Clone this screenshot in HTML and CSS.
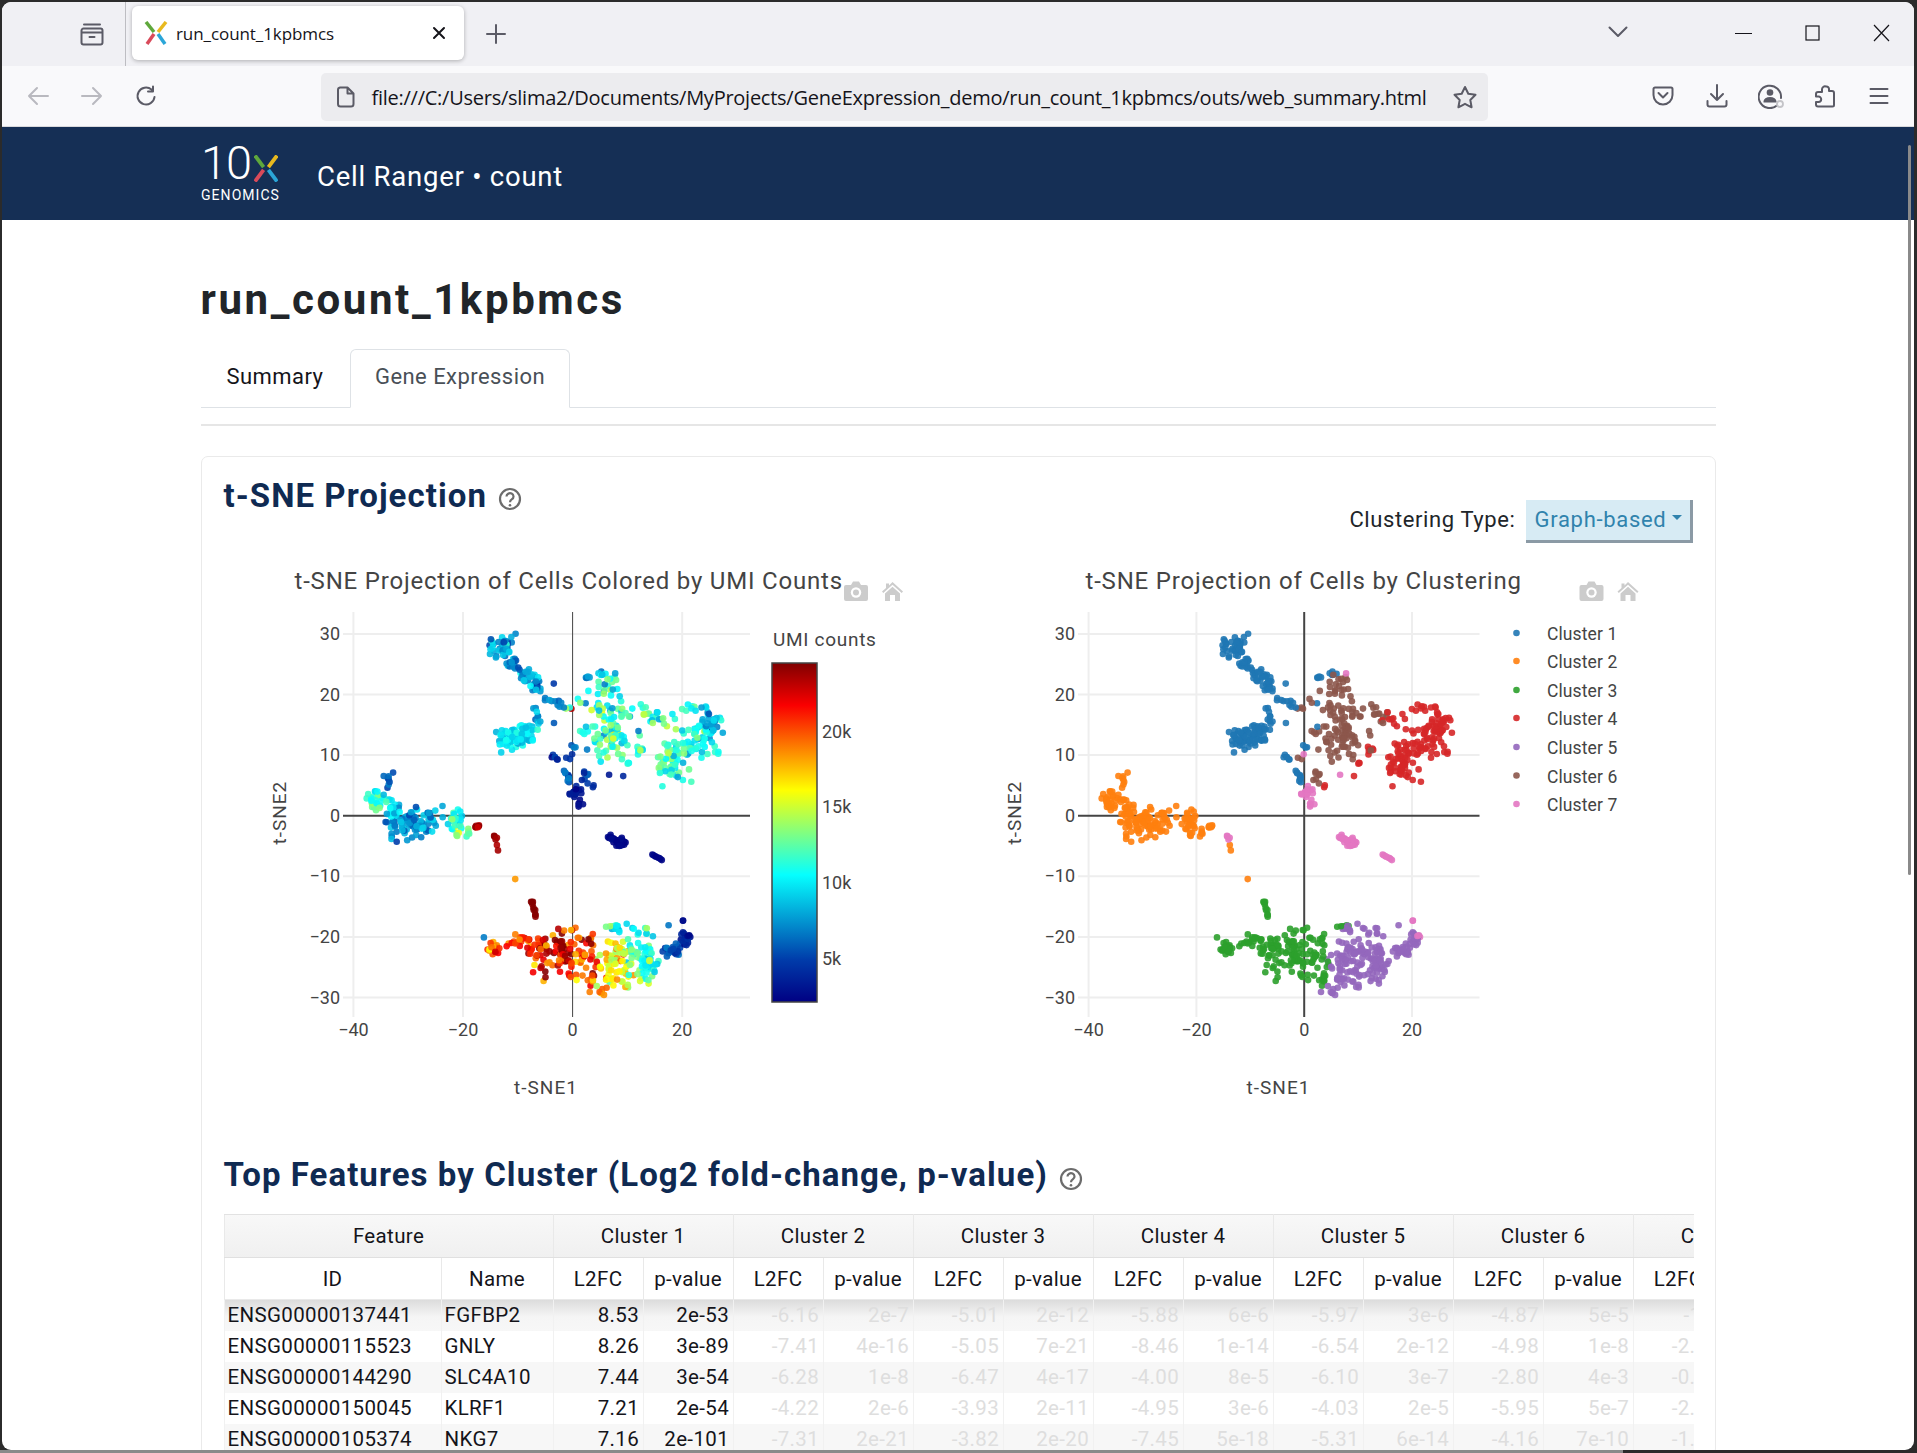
FILE: index.html
```html
<!DOCTYPE html>
<html lang="en">
<head>
<meta charset="utf-8">
<title>run_count_1kpbmcs</title>
<link rel="stylesheet" href="styles.css">
</head>
<body>
<div class="window">
  <div class="tabstrip">
    <div class="archive">
      <svg width="26" height="26" viewBox="0 0 26 26" class="chrome-icon"><path d="M5 3.500h16M2.500 9.500A2 2 0 0 1 4.500 7.500h17a2 2 0 0 1 2 2v12a2 2 0 0 1-2 2h-17a2 2 0 0 1-2-2zM2.500 11.500h21M10.500 16h5"/></svg>
    </div>
    <div class="tab">
      <svg width="24" height="24" viewBox="0 0 24 24" class="favicon"><path class="x-g" d="M2 1l8 10"/><path class="x-y" d="M22 1l-8 10"/><path class="x-r" d="M10 13L3 23"/><path class="x-b" d="M14 13l7 10"/></svg>
      <span class="tab-title">run_count_1kpbmcs</span>
      <svg width="14" height="14" viewBox="0 0 14 14" class="dark-icon"><path d="M2 2l10 10M12 2L2 12"/></svg>
    </div>
    <div class="plus"><svg width="20" height="20" viewBox="0 0 20 20" class="chrome-icon"><path d="M10 1v18M1 10h18"/></svg></div>
    <div class="chevron"><svg width="20" height="12" viewBox="0 0 20 12" class="chrome-icon"><path d="M1.500 1.500L10 10l8.500-8.500"/></svg></div>
    <div class="winctl"><svg width="17" height="3" viewBox="0 0 17 3" class="win-icon"><path d="M0 1.500h17"/></svg></div>
    <div class="winctl"><svg width="15" height="16" viewBox="0 0 15 16" class="win-icon"><rect x="1" y="1" width="13" height="14"/></svg></div>
    <div class="winctl"><svg width="17" height="18" viewBox="0 0 17 18" class="win-icon"><path d="M1 1l15 16M16 1L1 17"/></svg></div>
  </div>
  <div class="toolbar">
    <div class="tool"><svg width="22" height="20" viewBox="0 0 22 20" class="muted-icon"><path d="M21 10H2M10 2l-8 8 8 8"/></svg></div>
    <div class="tool"><svg width="22" height="20" viewBox="0 0 22 20" class="muted-icon"><path d="M1 10h19M12 2l8 8-8 8"/></svg></div>
    <div class="tool"><svg width="22" height="22" viewBox="0 0 22 22" class="chrome-icon"><path d="M19.500 12a8.500 8.500 0 1 1-3-7.500M18 1.500v5h-5"/></svg></div>
    <div class="urlbar">
      <svg width="18" height="22" viewBox="0 0 18 22" class="chrome-icon"><path d="M3 1.500h7.500l6 6V18a2.500 2.500 0 0 1-2.500 2.500H3.500A2.500 2.500 0 0 1 1 18V4A2.500 2.500 0 0 1 3 1.500zM10.500 1.500v6h6"/></svg>
      <span class="url">file:///C:/Users/slima2/Documents/MyProjects/GeneExpression_demo/run_count_1kpbmcs/outs/web_summary.html</span>
      <svg width="26" height="24" viewBox="0 0 26 24" class="chrome-icon"><path d="M13 2l3.300 6.800 7.200 1-5.200 5.200 1.300 7.300-6.600-3.500-6.600 3.500 1.300-7.300-5.200-5.200 7.200-1z"/></svg>
    </div>
    <div class="tools-right">
      <div class="tool"><svg width="22" height="20" viewBox="0 0 22 20" class="chrome-icon"><path d="M3 1.500h16A1.500 1.500 0 0 1 20.500 3v6a9.500 9.500 0 0 1-19 0V3A1.500 1.500 0 0 1 3 1.500zM6.500 7l4.500 4.500L15.500 7"/></svg></div>
      <div class="tool"><svg width="22" height="24" viewBox="0 0 22 24" class="chrome-icon"><path d="M11 1v15M5 10l6 6 6-6M1.500 17v3.500a2 2 0 0 0 2 2h15a2 2 0 0 0 2-2V17"/></svg></div>
      <div class="tool"><svg width="26" height="26" viewBox="0 0 26 26" class="chrome-icon"><path d="M19 22.500A11.200 11.200 0 1 1 23 15"/><circle class="solid" cx="12" cy="9.500" r="3.300"/><path class="solid" d="M5.500 18.500a6.500 4.500 0 0 1 13 0v1h-13z"/><circle class="badge" cx="22" cy="21" r="3"/></svg></div>
      <div class="tool"><svg width="22" height="24" viewBox="0 0 22 24" class="chrome-icon"><path d="M12 2.500a2.600 2.600 0 0 1 3 3V7h3a2 2 0 0 1 2 2v12a1.500 1.500 0 0 1-1.500 1.500H4a2 2 0 0 1-2-2V18h2.500a2.700 2.700 0 0 0 0-5.400H2V10a2 2 0 0 1 2-2h4V5.500a3 3 0 0 1 4-3z"/></svg></div>
      <div class="tool"><svg width="20" height="18" viewBox="0 0 20 18" class="chrome-icon"><path d="M1.500 2h17M1.500 9h17M1.500 16h17"/></svg></div>
    </div>
  </div>
  <div class="page">
    <header class="brand">
      <div class="logo">
        <div class="logo-top">
          <span class="logo-ten">10</span>
          <svg width="24" height="27" viewBox="0 0 25 27" class="logo-x"><path class="x-g" d="M1 0l9 12"/><path class="x-y" d="M24 0l-9 12"/><path class="x-r" d="M10 15L1 27"/><path class="x-b" d="M15 15l9 12"/></svg>
        </div>
        <div class="logo-word">GENOMICS</div>
      </div>
      <div class="brand-title">Cell Ranger • count</div>
    </header>
    <main class="content">
      <h1 class="run-title">run_count_1kpbmcs</h1>
      <nav class="tabs">
        <div class="nav-tab">Summary</div>
        <div class="nav-tab active">Gene Expression</div>
      </nav>
      <div class="rule"></div>
      <section class="card">
        <div class="card-head">
          <h2 class="section-title">t-SNE Projection
            <svg width="24" height="24" viewBox="0 0 24 24" class="help"><circle cx="12" cy="12" r="10"/><path d="M8.500 9.500a3.500 3.300 0 1 1 5.500 2.700c-1.300.9-2 1.500-2 3"/><circle class="dot" cx="12" cy="18.300" r="1.300"/></svg>
          </h2>
          <div class="cluster-ctl">
            <span class="cluster-label">Clustering Type:</span>
            <button class="cluster-btn" type="button">Graph-based<span class="caret"></span></button>
          </div>
        </div>
        <div class="plots">
          <svg id="plot-umi" class="plot" width="735" height="577" viewBox="0 0 735 577"></svg>
          <svg id="plot-cluster" class="plot" width="735" height="577" viewBox="0 0 735 577"></svg>
        </div>
        <h2 class="section-title features">Top Features by Cluster (Log2 fold-change, p-value)
          <svg width="24" height="24" viewBox="0 0 24 24" class="help"><circle cx="12" cy="12" r="10"/><path d="M8.500 9.500a3.500 3.300 0 1 1 5.500 2.700c-1.300.9-2 1.500-2 3"/><circle class="dot" cx="12" cy="18.300" r="1.300"/></svg>
        </h2>
        <div class="table-clip">
          <table class="features-table">
            <colgroup>
              <col class="c-id"><col class="c-name">
              <col class="c-v"><col class="c-v"><col class="c-v"><col class="c-v"><col class="c-v"><col class="c-v">
              <col class="c-v"><col class="c-v"><col class="c-v"><col class="c-v"><col class="c-v"><col class="c-v">
              <col class="c-v"><col class="c-v">
            </colgroup>
            <thead>
              <tr class="head-top">
                <th colspan="2">Feature</th><th colspan="2">Cluster 1</th><th colspan="2">Cluster 2</th><th colspan="2">Cluster 3</th><th colspan="2">Cluster 4</th><th colspan="2">Cluster 5</th><th colspan="2">Cluster 6</th><th colspan="2">Cluster 7</th>
              </tr>
              <tr class="head-sub">
                <th>ID</th><th>Name</th><th>L2FC</th><th>p-value</th><th>L2FC</th><th>p-value</th><th>L2FC</th><th>p-value</th><th>L2FC</th><th>p-value</th><th>L2FC</th><th>p-value</th><th>L2FC</th><th>p-value</th><th>L2FC</th><th>p-value</th>
              </tr>
            </thead>
            <tbody>
              <tr class="first"><td class="t">ENSG00000137441</td><td class="t">FGFBP2</td><td>8.53</td><td>2e-53</td><td class="d">-6.16</td><td class="d">2e-7</td><td class="d">-5.01</td><td class="d">2e-12</td><td class="d">-5.88</td><td class="d">6e-6</td><td class="d">-5.97</td><td class="d">3e-6</td><td class="d">-4.87</td><td class="d">5e-5</td><td class="d">-1.9</td><td class="d"></td></tr>
              <tr><td class="t">ENSG00000115523</td><td class="t">GNLY</td><td>8.26</td><td>3e-89</td><td class="d">-7.41</td><td class="d">4e-16</td><td class="d">-5.05</td><td class="d">7e-21</td><td class="d">-8.46</td><td class="d">1e-14</td><td class="d">-6.54</td><td class="d">2e-12</td><td class="d">-4.98</td><td class="d">1e-8</td><td class="d">-2.41</td><td class="d"></td></tr>
              <tr><td class="t">ENSG00000144290</td><td class="t">SLC4A10</td><td>7.44</td><td>3e-54</td><td class="d">-6.28</td><td class="d">1e-8</td><td class="d">-6.47</td><td class="d">4e-17</td><td class="d">-4.00</td><td class="d">8e-5</td><td class="d">-6.10</td><td class="d">3e-7</td><td class="d">-2.80</td><td class="d">4e-3</td><td class="d">-0.87</td><td class="d"></td></tr>
              <tr><td class="t">ENSG00000150045</td><td class="t">KLRF1</td><td>7.21</td><td>2e-54</td><td class="d">-4.22</td><td class="d">2e-6</td><td class="d">-3.93</td><td class="d">2e-11</td><td class="d">-4.95</td><td class="d">3e-6</td><td class="d">-4.03</td><td class="d">2e-5</td><td class="d">-5.95</td><td class="d">5e-7</td><td class="d">-2.33</td><td class="d"></td></tr>
              <tr><td class="t">ENSG00000105374</td><td class="t">NKG7</td><td>7.16</td><td>2e-101</td><td class="d">-7.31</td><td class="d">2e-21</td><td class="d">-3.82</td><td class="d">2e-20</td><td class="d">-7.45</td><td class="d">5e-18</td><td class="d">-5.31</td><td class="d">6e-14</td><td class="d">-4.16</td><td class="d">7e-10</td><td class="d">-1.58</td><td class="d"></td></tr>
            </tbody>
          </table>
        </div>
      </section>
    </main>
    <div class="scrollthumb"></div>
  </div>
</div>
<script src="chart.js"></script>
</body>
</html>
```
FILE: styles.css
```css
* { box-sizing: border-box; }
html, body { margin: 0; height: 100%; overflow: hidden; }
body {
  background: linear-gradient(to right, #8a8a8a 1623px, #2b2b2b 1623px) no-repeat left bottom / 100% 3px, #2b2b2b;
  font-family: Roboto, "Liberation Sans", sans-serif;
  padding: 2px 3px 3px 2px;
}
.window {
  height: 100%;
  border-radius: 9px;
  overflow: hidden;
  display: flex;
  flex-direction: column;
  background: #fff;
}
.tabstrip {
  height: 64px;
  flex: none;
  background: #f0f0f4;
  display: flex;
  align-items: flex-start;
}
.archive {
  width: 123.500px;
  height: 64px;
  padding-left: 77px;
  display: flex;
  align-items: center;
  border-right: 1px solid #bdbdc2;
  margin-right: 6.500px;
}
.tab {
  width: 332px;
  height: 54px;
  margin-top: 4px;
  background: #fff;
  border-radius: 6px;
  box-shadow: 0 1px 4px rgba(0,0,0,.28);
  display: flex;
  align-items: center;
  padding: 0 18px 0 12px;
}
.tab-title { flex: 1; margin-left: 8px; font: 17px "Open Sans", sans-serif; letter-spacing: -.08px; color: #15141a; }
.favicon path, .logo-x path { fill: none; stroke-width: 3.500; }
.logo-x path { stroke-width: 4; }
.x-g { stroke: #5fa83c; }
.x-y { stroke: #e8b91f; }
.x-r { stroke: #d94a5a; }
.x-b { stroke: #2ba6d8; }
.chrome-icon, .muted-icon, .dark-icon, .win-icon { fill: none; stroke: #5b5b66; stroke-width: 2; stroke-linecap: round; stroke-linejoin: round; display: block; }
.muted-icon { stroke: #b9b9bf; }
.dark-icon { stroke: #15141a; }
.win-icon { stroke: #15141a; stroke-width: 1.200; stroke-linecap: butt; stroke-linejoin: miter; }
.chrome-icon .solid { fill: #5b5b66; stroke: none; }
.chrome-icon .badge { stroke: #c4c4c8; fill: #f9f9fb; stroke-width: 1.800; }
.plus { width: 54px; height: 64px; margin-left: 5px; display: flex; align-items: center; justify-content: center; }
.chevron { width: 40px; height: 60px; margin-left: auto; margin-right: 71px; display: flex; align-items: center; justify-content: center; }
.winctl { width: 69px; height: 62px; display: flex; align-items: center; justify-content: center; }
.winctl:last-child { margin-right: -2px; }
.toolbar {
  height: 61px;
  flex: none;
  background: #f9f9fb;
  border-bottom: 1px solid #d9d9dc;
  display: flex;
  align-items: center;
  padding: 0 8px 0 9px;
}
.tool { width: 54px; display: flex; justify-content: center; align-items: center; }
.urlbar {
  width: 1167px;
  height: 48px;
  margin-left: 147.500px;
  margin-top: 2px;
  background: #ececef;
  border-radius: 5px;
  display: flex;
  align-items: center;
  padding: 0 10px 0 16px;
}
.url { flex: 1; margin-left: 17px; font: 20px "Open Sans", sans-serif; letter-spacing: -.255px; color: #15141a; white-space: nowrap; }
.tools-right { margin-left: auto; display: flex; }
.page { flex: 1; min-height: 0; position: relative; overflow: hidden; }
.brand {
  height: 93px;
  background: #152f55;
  display: flex;
  align-items: center;
  padding-left: 199px;
}
.logo { width: 116px; color: #fff; margin-top: -1px; }
.logo-top { display: flex; align-items: flex-end; height: 38px; }
.logo-ten { font: 300 47px/38px Roboto, sans-serif; letter-spacing: -1px; }
.logo-x { margin-left: 3px; }
.logo-word { font: 14px/16px Roboto, sans-serif; letter-spacing: 1.050px; margin-top: 5px; }
.brand-title { color: #fff; font-size: 27.500px; letter-spacing: .77px; margin-top: 5px; }
.content { width: 1515px; margin: 0 auto; padding-top: 55px; }
.run-title { margin: 0; font-size: 42px; line-height: 50px; font-weight: 700; color: #212529; letter-spacing: 2.600px; }
.tabs { display: flex; margin-top: 24px; height: 59px; border-bottom: 1px solid #dee2e6; }
.nav-tab {
  height: 59px;
  padding: 0 25px;
  font-size: 22px;
  line-height: 53px;
  letter-spacing: .45px;
  color: #14141a;
  border: 1px solid transparent;
  border-radius: 6px 6px 0 0;
}
.nav-tab:first-child { margin-right: 1px; }
.nav-tab.active { padding: 0 23.500px; color: #495057; background: #fff; border-color: #dee2e6 #dee2e6 #fff; }
.rule { height: 2px; background: #e6e6e6; margin-top: 16px; }
.card {
  margin-top: 30px;
  border: 1px solid #eaeaea;
  border-radius: 7px;
  padding: 16px 22px 0;
}
.card-head { display: flex; justify-content: space-between; align-items: flex-start; height: 70px; }
.section-title { margin: 0; font-size: 33px; line-height: 46px; font-weight: 700; color: #0f2a52; letter-spacing: 1.050px; display: flex; align-items: center; gap: 11px; }
.help { fill: none; stroke: #6c6c6c; stroke-width: 2.200; flex: none; margin-top: 6px; }
.help .dot { fill: #6c6c6c; stroke: none; }
.cluster-ctl { display: flex; align-items: center; gap: 10px; margin-top: 27px; }
.cluster-label { font-size: 22px; color: #212529; letter-spacing: .6px; margin-top: -4px; }
.cluster-btn {
  width: 167px;
  height: 43px;
  background: #d7ebf4;
  border: none;
  border-right: 3px solid #8b9aa5;
  border-bottom: 3px solid #8b9aa5;
  color: #3083ad;
  font: 22px Roboto, sans-serif;
  letter-spacing: .7px;
  display: flex;
  align-items: center;
  padding: 0 0 2px 9px;
}
.caret { width: 0; height: 0; margin-left: 6px; margin-top: -4px; border: 5.500px solid transparent; border-top-color: #3083ad; border-bottom: 0; }
.plots { display: flex; }
.plot { flex: none; display: block; }
.plot-title { font-size: 24px; fill: #444; letter-spacing: .8px; }
.tick { font-size: 18px; fill: #444; }
.legend-text { font-size: 17.500px; fill: #444; letter-spacing: .1px; }
.axis-title { font-size: 19px; fill: #444; letter-spacing: 1px; }
.cbar-title { font-size: 19px; fill: #444; letter-spacing: .7px; }
.grid { stroke: #eee; stroke-width: 2; }
.zero { stroke: #444; stroke-width: 2; }
.zero.thin { stroke-width: 1; }
.cbar { stroke: #444; stroke-width: 1.500; }
.modebar-icon { fill: #ccc; }
.modebar-lens { fill: #fff; }
.features { margin-top: 32px; }
.features .help { margin-top: 8px; }
.table-clip { margin-top: 16px; overflow: hidden; width: 1470px; }
.features-table { border-collapse: collapse; table-layout: fixed; width: 1589px; font-size: 20.500px; letter-spacing: .35px; color: #14141a; }
.c-id { width: 217px; }
.c-name { width: 112px; }
.c-v { width: 90px; }
.features-table th { font-weight: 400; text-align: center; padding: 0; border: 1px solid #e9e9e9; white-space: nowrap; overflow: hidden; }
.head-top { height: 43px; background: linear-gradient(#f8f8f8, #f0f0f0); }
.head-top th { border-top: 1px solid #e2e2e2; border-bottom: 1px solid #e0e0e0; }
.head-sub { height: 42px; background: #fff; }
.features-table td { text-align: right; padding: 0 3.500px 0 3px; height: 31px; border-left: 1px solid #f1f1f1; white-space: nowrap; overflow: hidden; }
.features-table td.t { text-align: left; }
.features-table tbody tr:nth-child(odd) { background: #f7f7f7; }
.features-table tr.first { background: linear-gradient(#dcdcdc, #f5f5f5 55%, #f7f7f7) !important; }
.features-table td.d { color: #dedede; }
.scrollthumb { position: absolute; top: 18px; right: 3px; width: 3px; height: 730px; background: #8a8a8a; border-radius: 2px; }
```
FILE: chart.js
```js
(function () {
  var NS = 'http://www.w3.org/2000/svg';
  var seed = 20231;
  function rnd() {
    seed |= 0; seed = seed + 0x6D2B79F5 | 0;
    var t = Math.imul(seed ^ seed >>> 15, 1 | seed);
    t = t + Math.imul(t ^ t >>> 7, 61 | t) ^ t;
    return ((t ^ t >>> 14) >>> 0) / 4294967296;
  }
  function gauss() {
    var g;
    do {
      g = Math.sqrt(-2 * Math.log(rnd() + 1e-9)) * Math.cos(2 * Math.PI * rnd());
    } while (Math.abs(g) > 2.1);
    return g;
  }
  // cluster, x, y, sx, sy, n, umi mean, umi sd, optional line end x2, y2
  var blobs = [
    [1,-12.9,28,1.2,1.1,40,8.5,1.8],
    [1,-10.9,25,.8,.8,12,7,1.2],
    [1,-8,23,.9,.8,22,8,1.5],
    [1,-6.7,21.2,.7,.9,14,7,1.5],
    [1,-5,19.4,.3,.3,10,7,1,-1.5,18],
    [1,-6.7,17.5,.5,.4,9,8,1,-6.7,15.2],
    [1,-11.3,12.5,1.4,1,40,9.6,.9],
    [1,-8.8,13.2,1.1,1,28,9.6,1],
    [1,-7,14.5,.4,.4,4,10,1],
    [1,-3.4,9.5,.4,.3,6,4,.8],
    [1,-1.2,7.5,.2,.2,10,6,1,-.5,5.5],
    [1,.4,11.5,.3,.2,3,7,1],
    [1,2.8,23,.3,.2,4,8,1],
    [1,5.5,23.4,.5,.2,5,9,1.5],
    [1,-3.4,21.6,.1,.1,1,5,.2],
    [1,-3.4,15.3,.1,.1,1,6,.2],
    [1,2.4,18.4,.1,.1,1,7,.2],
    [1,2.4,14.6,.1,.1,1,9,.2],
    [6,6.8,15.2,2.8,3.2,95,11.5,2.4],
    [6,7,21.5,1.3,1.2,14,11,2.5],
    [6,14,17.2,.8,1.1,12,12.5,2],
    [6,-.4,17.7,.5,.2,3,17,5],
    [6,2.4,6.3,.9,.5,7,5,1.5],
    [6,-1,9.6,.3,.3,2,4,.5],
    [6,2.7,10.7,.1,.1,1,7,.2],
    [4,18.3,8.6,1.7,1.9,56,11.5,1.8],
    [4,22.7,12.2,2.3,1.3,42,10.5,1.8],
    [4,25,15.5,1.4,1.3,34,8.5,1.5],
    [4,16.5,15.9,1.5,.9,10,12,2],
    [4,21.5,17.5,1,.5,6,11,1.5],
    [4,12,10.5,.8,.6,6,11,1],
    [4,10,8.7,.3,.2,3,11,1],
    [4,9.2,6.6,.1,.1,1,4,.2],
    [4,3.9,4.9,.2,.2,2,4,.3],
    [7,.7,3.7,.6,.6,12,3,.5],
    [7,1,1.9,.5,.4,5,2.5,.3],
    [7,6.5,-3.4,.2,.2,14,2.4,.2,8.2,-4.3],
    [7,8.8,-4.4,.6,.4,24,2.4,.2],
    [7,14.5,-6.4,.1,.1,8,2.4,.2,16.3,-7.3],
    [7,-14,-3.7,.2,.3,4,23.5,.6],
    [7,-.2,10.3,.1,.1,1,4,.3],
    [7,6.7,6.7,.1,.1,1,3,.2],
    [7,7.6,23.5,.1,.1,1,8,.5],
    [7,20.2,-17.4,.1,.1,2,2.8,.2],
    [7,21.3,-19.9,.2,.2,4,2.8,.2],
    [2,-35.3,2.6,1.1,1,26,11,1.2],
    [2,-36.5,1.8,.3,.4,6,13,.8],
    [2,-33.5,5.8,.5,.7,8,5.500,1],
    [2,-32.5,.8,.9,1,14,9,1.2],
    [2,-29.8,-1.4,2.2,1.4,62,7.8,1.2],
    [2,-26,-.8,1.4,1.5,18,7.5,1.2],
    [2,-21.3,-.8,1,1,22,11,1.5],
    [2,-20,-2.5,.9,.5,10,13,1.5],
    [2,-17.5,-1.7,.4,.2,6,21.5,1.8],
    [2,-32,-4.3,.1,.1,1,5,.2],
    [2,-13.7,-5.7,.1,.1,1,23.5,.3],
    [2,-14,-4.8,.1,.1,1,23.5,.3],
    [2,-10.3,-10.5,.1,.1,1,18.5,.2],
    [3,-14.3,-21.8,.7,.6,24,20,2.2],
    [3,-16.2,-20.2,.1,.1,1,7,.2],
    [3,-10,-20.8,2.1,.6,20,20.5,1.5],
    [3,-6.2,-21.5,1,.8,12,21,1.5],
    [3,-2,-22.5,3.1,2.3,74,21.3,2.8],
    [3,-2.5,-21.5,2,1.5,14,24.2,.4],
    [3,2.4,-23,1.4,2.1,20,20,2.5],
    [3,-7.6,-14,.1,.2,10,24.2,.3,-6.6,-16.6],
    [3,3.2,-27.5,.5,.8,6,21,3],
    [3,7,-18.2,.8,.2,5,12,1],
    [3,-5,-26.8,.1,.1,1,24,.2],
    [3,-.4,-26.6,.1,.1,1,20.5,.5],
    [5,7.5,-24.5,1.8,2.5,56,16.5,2.2],
    [5,11.6,-23.5,2,2.8,54,12.6,1.8],
    [5,13.7,-24.3,1,1.4,24,10,1],
    [5,8,-18.6,.6,.3,7,10,1],
    [5,10.5,-18,.6,.2,6,9.5,.5,14,-20],
    [5,18,-22.3,1.1,.7,24,5.8,.9],
    [5,20.3,-20.2,.6,.7,14,3.5,.7],
    [5,17.5,-18,.2,.1,1,7,.3],
    [5,5.8,-29,.6,.3,5,18,2],
    [5,3.2,-29.2,.1,.1,1,19,.2]
  ];
  var pts = [];
  blobs.forEach(function (b) {
    for (var i = 0; i < b[5]; i++) {
      var cx = b[1], cy = b[2];
      if (b.length > 8) {
        var f = b[5] > 1 ? i / (b[5] - 1) : 0;
        cx = b[1] + (b[8] - b[1]) * f;
        cy = b[2] + (b[9] - b[2]) * f;
      }
      var u = b[6] + gauss() * b[7];
      pts.push({
        x: cx + gauss() * b[3],
        y: cy + gauss() * b[4],
        c: b[0],
        u: Math.min(24.4, Math.max(2.3, u))
      });
    }
  });
  // draw order shuffle stays deterministic
  for (var k = pts.length - 1; k > 0; k--) {
    var j = Math.floor(rnd() * (k + 1));
    var tmp = pts[k]; pts[k] = pts[j]; pts[j] = tmp;
  }

  var clusterColors = { 1: '#1f77b4', 2: '#ff7f0e', 3: '#2ca02c', 4: '#d62728', 5: '#9467bd', 6: '#8c564b', 7: '#e377c2' };
  var jet = [[0, [0, 0, 131]], [.125, [0, 60, 170]], [.375, [5, 255, 255]], [.625, [255, 255, 0]], [.875, [250, 0, 0]], [1, [128, 0, 0]]];
  var UMIN = 2.16, UMAX = 24.5;
  function jetColor(t) {
    for (var i = 1; i < jet.length; i++) {
      if (t <= jet[i][0]) {
        var a = jet[i - 1], b = jet[i], f = (t - a[0]) / (b[0] - a[0]);
        return 'rgb(' + [0, 1, 2].map(function (c) { return Math.round(a[1][c] + (b[1][c] - a[1][c]) * f); }).join(',') + ')';
      }
    }
    return 'rgb(128,0,0)';
  }
  function el(parent, name, attrs, text) {
    var e = document.createElementNS(NS, name);
    for (var key in attrs) e.setAttribute(key, attrs[key]);
    if (text !== undefined) e.textContent = text;
    parent.appendChild(e);
    return e;
  }
  function fmt(v) { return v < 0 ? '\u2212' + (-v) : String(v); }

  function drawPlot(svg, o) {
    var sx = function (v) { return o.x0 + v * o.kx; };
    var sy = function (v) { return o.y0 - v * o.ky; };
    [-40, -20, 20].forEach(function (v) {
      el(svg, 'line', { x1: sx(v), x2: sx(v), y1: o.top, y2: o.bottom, class: 'grid' });
    });
    [-30, -20, -10, 10, 20, 30].forEach(function (v) {
      el(svg, 'line', { x1: o.left, x2: o.right, y1: sy(v), y2: sy(v), class: 'grid' });
    });
    el(svg, 'line', { x1: sx(0), x2: sx(0), y1: o.top, y2: o.bottom, class: o.thinV ? 'zero thin' : 'zero' });
    el(svg, 'line', { x1: o.left, x2: o.right, y1: sy(0), y2: sy(0), class: 'zero' });
    pts.forEach(function (p) {
      el(svg, 'circle', {
        cx: sx(p.x).toFixed(1), cy: sy(p.y).toFixed(1), r: 3.3,
        fill: o.color(p), 'fill-opacity': .9
      });
    });
    [-40, -20, 0, 20].forEach(function (v) {
      el(svg, 'text', { x: sx(v), y: 493, class: 'tick', 'text-anchor': 'middle' }, fmt(v));
    });
    [-30, -20, -10, 0, 10, 20, 30].forEach(function (v) {
      el(svg, 'text', { x: o.left - 3, y: sy(v) + 6, class: 'tick', 'text-anchor': 'end' }, fmt(v));
    });
    el(svg, 'text', { x: o.titleX, y: 46, class: 'plot-title' }, o.title);
    el(svg, 'text', { x: o.xTitleX, y: 551, class: 'axis-title', 'text-anchor': 'middle' }, 't-SNE1');
    el(svg, 'text', { class: 'axis-title', 'text-anchor': 'middle', transform: 'translate(' + (o.yTitleX + 7) + ',' + (o.y0 - 3) + ') rotate(-90)' }, 't-SNE2');
    // mode bar: camera and home
    var cam = el(svg, 'g', { transform: 'translate(' + o.camX + ',38)' });
    el(cam, 'path', { class: 'modebar-icon', d: 'M2 4h5l2-3.500h6L17 4h5a2 2 0 0 1 2 2v12a2 2 0 0 1-2 2H2a2 2 0 0 1-2-2V6a2 2 0 0 1 2-2z' });
    el(cam, 'circle', { class: 'modebar-lens', cx: 12, cy: 11.500, r: 5.200 });
    el(cam, 'circle', { class: 'modebar-icon', cx: 12, cy: 11.500, r: 3 });
    var home = el(svg, 'g', { transform: 'translate(' + (o.camX + 38) + ',39)' });
    el(home, 'path', { class: 'modebar-icon', d: 'M10.500 0L21 9.500l-1.300 1.500-9.200-8.300L1.300 11 0 9.500 4 6V1.500h3v2z M3 11.500l7.500-6.700 7.500 6.700V19h-5v-6H8v6H3z' });
  }

  var svgU = document.getElementById('plot-umi');
  var svgC = document.getElementById('plot-cluster');

  drawPlot(svgU, {
    x0: 348.6, kx: 5.48, y0: 272.7, ky: 6.06, left: 119, right: 526, top: 69, bottom: 474,
    title: 't-SNE Projection of Cells Colored by UMI Counts', titleX: 70.5, xTitleX: 322, yTitleX: 55,
    camX: 620, thinV: true,
    color: function (p) { return jetColor((p.u - UMIN) / (UMAX - UMIN)); }
  });
  drawPlot(svgC, {
    x0: 345.2, kx: 5.39, y0: 272.7, ky: 6.06, left: 119, right: 520.5, top: 69, bottom: 474,
    title: 't-SNE Projection of Cells by Clustering', titleX: 126.5, xTitleX: 319.5, yTitleX: 55,
    camX: 620.5,
    color: function (p) { return clusterColors[p.c]; }
  });

  // colour bar
  var defs = el(svgU, 'defs', {});
  var grad = el(defs, 'linearGradient', { id: 'jet', x1: 0, y1: 1, x2: 0, y2: 0 });
  jet.forEach(function (s) {
    el(grad, 'stop', { offset: s[0], 'stop-color': 'rgb(' + s[1].join(',') + ')' });
  });
  el(svgU, 'rect', { x: 548, y: 120, width: 45, height: 339, fill: 'url(#jet)', class: 'cbar' });
  [[5, 416], [10, 340], [15, 264], [20, 189]].forEach(function (t) {
    el(svgU, 'text', { x: 598, y: t[1] + 6, class: 'tick' }, t[0] + 'k');
  });
  el(svgU, 'text', { x: 549, y: 103, class: 'cbar-title' }, 'UMI counts');

  // legend
  [92, 120, 149, 177, 206, 234.5, 263].forEach(function (y, i) {
    el(svgC, 'circle', { cx: 557.5, cy: y - 2, r: 3.3, fill: clusterColors[i + 1], 'fill-opacity': .9 });
    el(svgC, 'text', { x: 588, y: y + 5, class: 'legend-text' }, 'Cluster ' + (i + 1));
  });
})();
```
